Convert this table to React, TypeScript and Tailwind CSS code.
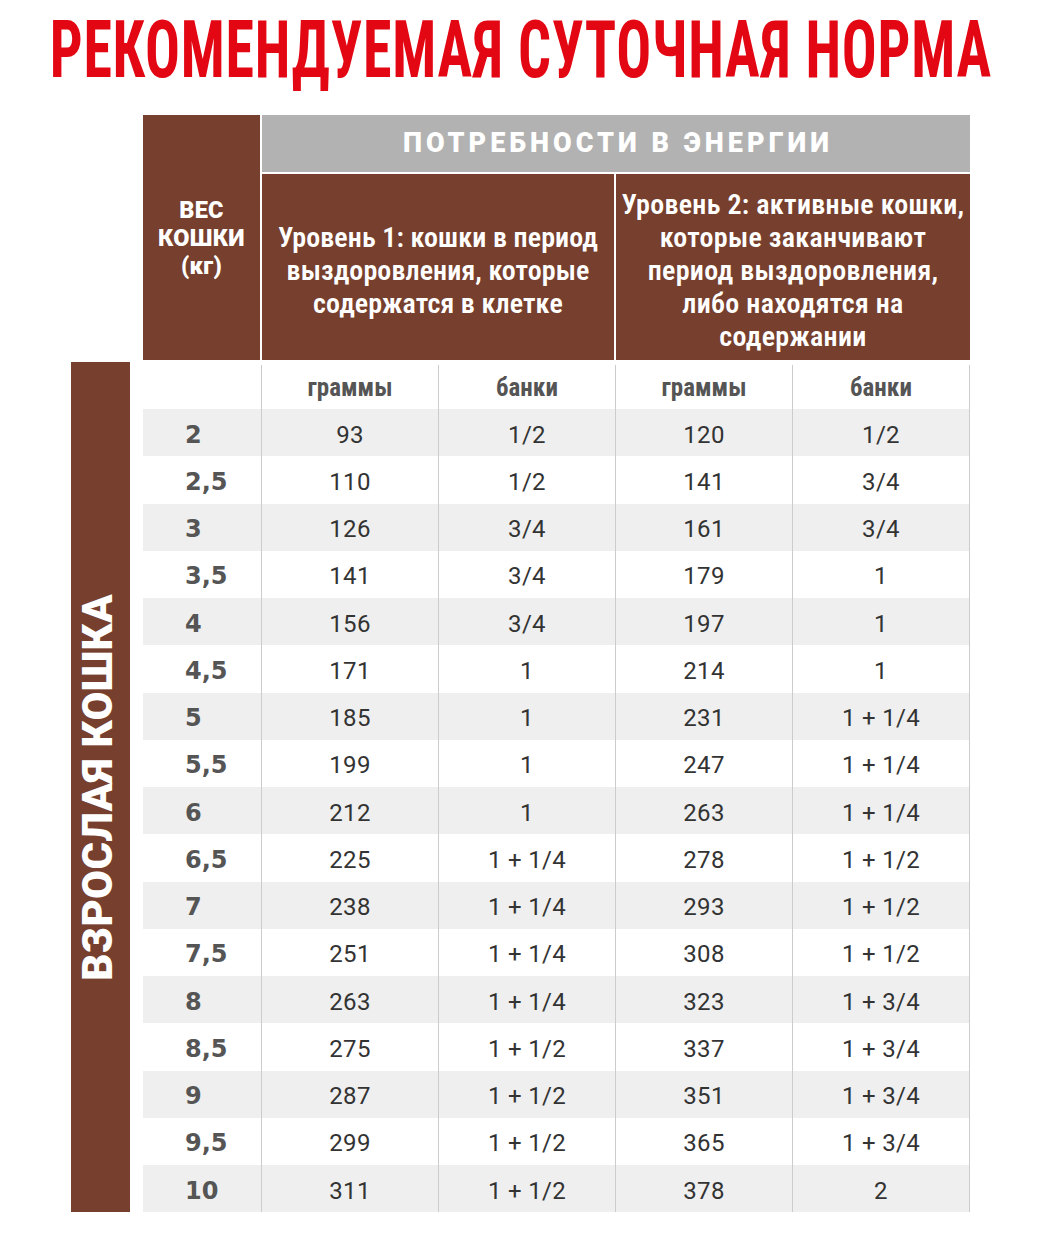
import React from "react";

const rows: string[][] = [
  ["2", "93", "1/2", "120", "1/2"],
  ["2,5", "110", "1/2", "141", "3/4"],
  ["3", "126", "3/4", "161", "3/4"],
  ["3,5", "141", "3/4", "179", "1"],
  ["4", "156", "3/4", "197", "1"],
  ["4,5", "171", "1", "214", "1"],
  ["5", "185", "1", "231", "1 + 1/4"],
  ["5,5", "199", "1", "247", "1 + 1/4"],
  ["6", "212", "1", "263", "1 + 1/4"],
  ["6,5", "225", "1 + 1/4", "278", "1 + 1/2"],
  ["7", "238", "1 + 1/4", "293", "1 + 1/2"],
  ["7,5", "251", "1 + 1/4", "308", "1 + 1/2"],
  ["8", "263", "1 + 1/4", "323", "1 + 3/4"],
  ["8,5", "275", "1 + 1/2", "337", "1 + 3/4"],
  ["9", "287", "1 + 1/2", "351", "1 + 3/4"],
  ["9,5", "299", "1 + 1/2", "365", "1 + 3/4"],
  ["10", "311", "1 + 1/2", "378", "2"],
];

function DataRow({ r, gray }: { r: string[]; gray: boolean }) {
  return (
    <div
      className={`grid grid-cols-[118px_177px_177px_177px_178px] h-[47.25px] ${
        gray ? "bg-[#efefef]" : "bg-white"
      }`}
    >
      <div className="flex items-center pl-[42px] pt-[4px] font-['DejaVu_Sans',sans-serif] font-bold text-[24px] leading-none text-[#555555]">
        {r[0]}
      </div>
      {r.slice(1).map((v, i) => (
        <div
          key={i}
          className={`flex items-center justify-center pt-[4px] border-l border-[#cccccc] font-['Roboto',sans-serif] font-normal text-[24px] leading-none tracking-[0.3px] text-[#333333] ${
            i === 3 ? "border-r" : ""
          }`}
        >
          {v}
        </div>
      ))}
    </div>
  );
}

export default function App() {
  const sub =
    "flex items-center justify-center border-l border-[#cccccc] font-['Roboto',sans-serif] [font-stretch:75%] font-bold text-[25px] leading-none text-[#555555]";
  return (
    <div className="w-[1042px] h-[1250px] bg-white overflow-hidden">
      {/* Title */}
      <div className="h-[115px] overflow-hidden flex justify-center pt-[10px]">
        <h1 className="shrink-0 whitespace-nowrap font-['Roboto',sans-serif] [font-stretch:75%] font-bold text-[80px] leading-[80px] tracking-[1px] text-[#e30613] scale-x-[0.725]">
          РЕКОМЕНДУЕМАЯ СУТОЧНАЯ НОРМА
        </h1>
      </div>

      {/* Header */}
      <div className="ml-[143px] w-[827px] grid grid-cols-[117px_352px_354px] grid-rows-[57px_186px] gap-[2px]">
        <div className="row-span-2 bg-[#773f2d] flex flex-col items-center justify-center font-['Roboto',sans-serif] font-black text-[23.5px] leading-[28px] tracking-[0.3px] text-white">
          <span>ВЕС</span>
          <span>КОШКИ</span>
          <span>(кг)</span>
        </div>
        <div className="col-span-2 bg-[#b2b2b2] flex items-center justify-center pl-[4px] font-['Roboto',sans-serif] font-black text-[27px] leading-none tracking-[4px] text-white">
          ПОТРЕБНОСТИ В ЭНЕРГИИ
        </div>
        <div className="bg-[#773f2d] flex flex-col items-center justify-center pt-[6px] font-['Roboto',sans-serif] [font-stretch:75%] font-semibold text-[28px] leading-[33px] tracking-[0.1px] text-white whitespace-nowrap">
          <span>Уровень 1: кошки в период</span>
          <span>выздоровления, которые</span>
          <span>содержатся в клетке</span>
        </div>
        <div className="bg-[#773f2d] flex flex-col items-center justify-center pt-[6px] font-['Roboto',sans-serif] [font-stretch:75%] font-semibold text-[28px] leading-[33px] tracking-[0.3px] text-white whitespace-nowrap">
          <span>Уровень 2: активные кошки,</span>
          <span>которые заканчивают</span>
          <span>период выздоровления,</span>
          <span>либо находятся на</span>
          <span>содержании</span>
        </div>
      </div>

      {/* Body */}
      <div className="flex mt-[2px] ml-[71px]">
        <div className="w-[59px] bg-[#773f2d] flex items-center justify-center">
          <span className="[writing-mode:vertical-rl] rotate-180 whitespace-nowrap font-['Roboto',sans-serif] font-black text-[42px] leading-none tracking-[0.3px] text-white pl-[6px]">
            ВЗРОСЛАЯ КОШКА
          </span>
        </div>
        <div className="ml-[13px] w-[827px]">
          <div className="grid grid-cols-[118px_177px_177px_177px_178px] h-[47px] pt-[3px] bg-white">
            <div />
            <div className={sub}>граммы</div>
            <div className={sub}>банки</div>
            <div className={sub}>граммы</div>
            <div className={`${sub} border-r`}>банки</div>
          </div>
          {rows.map((r, i) => (
            <DataRow key={i} r={r} gray={i % 2 === 0} />
          ))}
        </div>
      </div>
    </div>
  );
}
